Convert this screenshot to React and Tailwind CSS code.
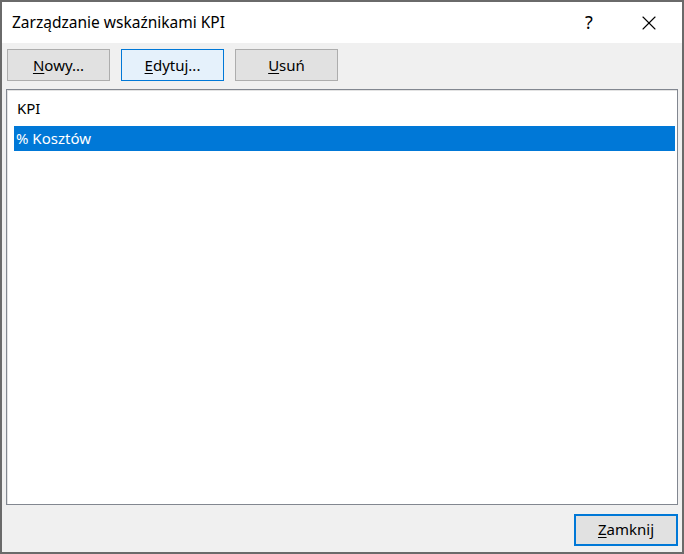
import { X } from "lucide-react";

function Btn({ label, accel, rest, variant = "normal", className = "" }) {
  const styles = {
    normal: "border border-[#adadad] bg-[#e1e1e1]",
    hover: "border border-[#0078d7] bg-[#e5f1fb]",
    default: "border-2 border-[#0078d7] bg-[#e1e1e1]",
  };
  return (
    <button
      type="button"
      className={`flex h-[32px] w-[103px] items-center justify-center text-[15px] text-black ${styles[variant]} ${className}`}
    >
      <span>
        <span className="underline underline-offset-2">{accel}</span>
        {rest}
      </span>
    </button>
  );
}

export default function App() {
  return (
    <div
      className="flex h-[554px] w-[684px] flex-col border-2 border-[#6a6a6a] bg-[#f0f0f0] text-black"
      style={{ fontFamily: '"Noto Sans", "Open Sans", sans-serif' }}
    >
      {/* title bar */}
      <div className="flex h-[41px] items-center bg-white pl-[10px]">
        <span className="text-[15.5px]">Zarządzanie wskaźnikami KPI</span>
        <div className="ml-auto flex items-center">
          <span className="w-[20px] text-center text-[18px]">?</span>
          <span className="ml-[38px] mr-[21px] flex items-center">
            <X className="h-[24px] w-[24px]" strokeWidth={1.1} />
          </span>
        </div>
      </div>

      {/* toolbar */}
      <div className="flex gap-[11px] pl-[5px] pt-[6px]">
        <Btn accel="N" rest="owy..." />
        <Btn accel="E" rest="dytuj..." variant="hover" />
        <Btn accel="U" rest="suń" />
      </div>

      {/* list */}
      <div className="mx-[4px] mt-[8px] flex-1 border border-[#828790] bg-white p-[6px] pl-[7px] pr-[2px] shadow-[inset_1px_1px_0_#e3e3e3]">
        <div className="mb-[5px] flex h-[25px] items-center pl-[3px] text-[15px]">KPI</div>
        <div className="flex h-[25px] items-center bg-[#0078d7] pl-[2px] text-[15px] text-white">
          % Kosztów
        </div>
      </div>

      {/* footer */}
      <div className="flex h-[47px] items-center justify-end pr-[4px] pt-[2px]">
        <Btn accel="Z" rest="amknij" variant="default" className="w-[104px]" />
      </div>
    </div>
  );
}
